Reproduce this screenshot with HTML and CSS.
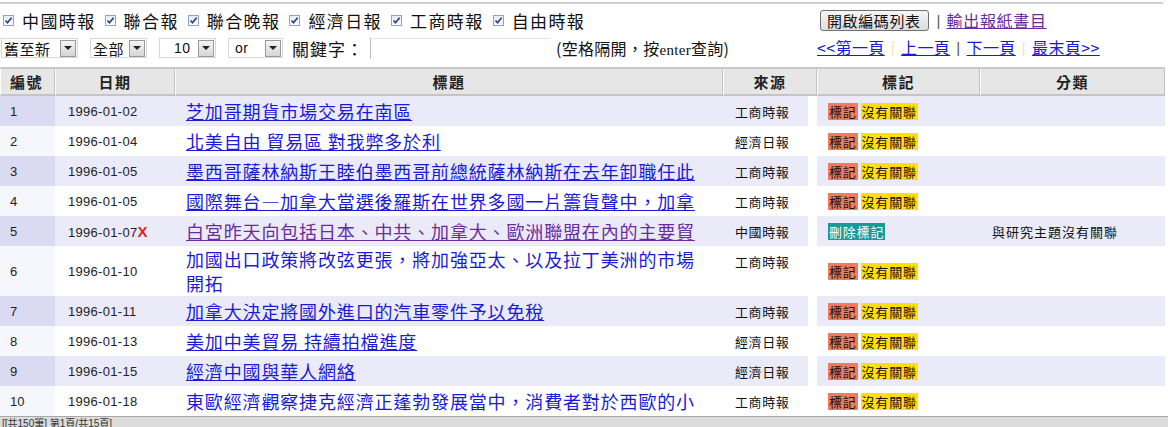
FILE: index.html
```html
<!DOCTYPE html>
<html lang="zh-Hant">
<head>
<meta charset="utf-8">
<title>新聞檢索</title>
<link rel="stylesheet" href="styles.css">
</head>
<body>
<div class="page">
  <div class="toolbar">
    <div class="toolbar-left">
      <div class="sources">
        <label class="src"><span class="cb"><svg viewBox="0 0 11 11" width="11" height="11"><path d="M2.5 5.5 L4.5 7.8 L8.6 2.8" fill="none" stroke="#2a3f8f" stroke-width="1.7"/></svg></span>中國時報</label>
        <label class="src"><span class="cb"><svg viewBox="0 0 11 11" width="11" height="11"><path d="M2.5 5.5 L4.5 7.8 L8.6 2.8" fill="none" stroke="#2a3f8f" stroke-width="1.7"/></svg></span>聯合報</label>
        <label class="src"><span class="cb"><svg viewBox="0 0 11 11" width="11" height="11"><path d="M2.5 5.5 L4.5 7.8 L8.6 2.8" fill="none" stroke="#2a3f8f" stroke-width="1.7"/></svg></span>聯合晚報</label>
        <label class="src"><span class="cb"><svg viewBox="0 0 11 11" width="11" height="11"><path d="M2.5 5.5 L4.5 7.8 L8.6 2.8" fill="none" stroke="#2a3f8f" stroke-width="1.7"/></svg></span>經濟日報</label>
        <label class="src"><span class="cb"><svg viewBox="0 0 11 11" width="11" height="11"><path d="M2.5 5.5 L4.5 7.8 L8.6 2.8" fill="none" stroke="#2a3f8f" stroke-width="1.7"/></svg></span>工商時報</label>
        <label class="src"><span class="cb"><svg viewBox="0 0 11 11" width="11" height="11"><path d="M2.5 5.5 L4.5 7.8 L8.6 2.8" fill="none" stroke="#2a3f8f" stroke-width="1.7"/></svg></span>自由時報</label>
      </div>
      <div class="filters">
        <div class="select sel-order"><span class="sel-text">舊至新</span><span class="sel-arrow"><svg viewBox="0 0 8 4" width="8" height="4"><path d="M0 0 L8 0 L4 4 Z" fill="#222"/></svg></span></div>
        <div class="select sel-range"><span class="sel-text">全部</span><span class="sel-arrow"><svg viewBox="0 0 8 4" width="8" height="4"><path d="M0 0 L8 0 L4 4 Z" fill="#222"/></svg></span></div>
        <div class="select sel-count"><span class="sel-text num">10</span><span class="sel-arrow"><svg viewBox="0 0 8 4" width="8" height="4"><path d="M0 0 L8 0 L4 4 Z" fill="#222"/></svg></span></div>
        <div class="select sel-op"><span class="sel-text num">or</span><span class="sel-arrow"><svg viewBox="0 0 8 4" width="8" height="4"><path d="M0 0 L8 0 L4 4 Z" fill="#222"/></svg></span></div>
        <span class="kw-label">關鍵字：</span>
        <span class="kw-input"></span>
        <span class="hint">(空格隔開，按<span class="hint-en">enter</span>查詢)</span>
      </div>
    </div>
    <div class="toolbar-right">
      <div class="actions">
        <span class="btn">開啟編碼列表</span>
        <span class="sep">|</span>
        <a class="visited" href="#">輸出報紙書目</a>
      </div>
      <div class="pager">
        <a href="#">&lt;&lt;第一頁</a><span class="sep light">|</span><a href="#">上一頁</a><span class="sep">|</span><a href="#">下一頁</a><span class="sep light">|</span><a href="#">最末頁&gt;&gt;</a>
      </div>
    </div>
  </div>

  <table class="results">
    <colgroup>
      <col class="c-no"><col class="c-date"><col class="c-title"><col class="c-src"><col class="c-mark"><col class="c-cat">
    </colgroup>
    <thead>
      <tr>
        <th class="th-no">編號</th><th>日期</th><th>標題</th><th>來源</th><th>標記</th><th>分類</th>
      </tr>
    </thead>
    <tbody>
      <tr class="odd"><td class="no">1</td><td class="date">1996-01-02</td><td class="title"><a href="#">芝加哥期貨市場交易在南區</a></td><td class="src">工商時報</td><td class="mark"><span class="tag t-mark">標記</span> <span class="tag t-none">沒有關聯</span></td><td class="cat"></td></tr>
      <tr class="even"><td class="no">2</td><td class="date">1996-01-04</td><td class="title"><a href="#">北美自由 貿易區 對我弊多於利</a></td><td class="src">經濟日報</td><td class="mark"><span class="tag t-mark">標記</span> <span class="tag t-none">沒有關聯</span></td><td class="cat"></td></tr>
      <tr class="odd"><td class="no">3</td><td class="date">1996-01-05</td><td class="title"><a href="#">墨西哥薩林納斯王睦伯墨西哥前總統薩林納斯在去年卸職任此</a></td><td class="src">工商時報</td><td class="mark"><span class="tag t-mark">標記</span> <span class="tag t-none">沒有關聯</span></td><td class="cat"></td></tr>
      <tr class="even"><td class="no">4</td><td class="date">1996-01-05</td><td class="title"><a href="#">國際舞台—加拿大當選後羅斯在世界多國一片籌貨聲中，加拿</a></td><td class="src">工商時報</td><td class="mark"><span class="tag t-mark">標記</span> <span class="tag t-none">沒有關聯</span></td><td class="cat"></td></tr>
      <tr class="odd"><td class="no">5</td><td class="date">1996-01-07<span class="x">X</span></td><td class="title"><a class="visited" href="#">白宮昨天向包括日本、中共、加拿大、歐洲聯盟在內的主要貿</a></td><td class="src">中國時報</td><td class="mark"><span class="tag t-del">刪除標記</span></td><td class="cat">與研究主題沒有關聯</td></tr>
      <tr class="even"><td class="no">6</td><td class="date">1996-01-10</td><td class="title"><a class="plain" href="#">加國出口政策將改弦更張，將加強亞太、以及拉丁美洲的市場開拓</a></td><td class="src">工商時報</td><td class="mark"><span class="tag t-mark">標記</span> <span class="tag t-none">沒有關聯</span></td><td class="cat"></td></tr>
      <tr class="odd"><td class="no">7</td><td class="date">1996-01-11</td><td class="title"><a href="#">加拿大決定將國外進口的汽車零件予以免稅</a></td><td class="src">工商時報</td><td class="mark"><span class="tag t-mark">標記</span> <span class="tag t-none">沒有關聯</span></td><td class="cat"></td></tr>
      <tr class="even"><td class="no">8</td><td class="date">1996-01-13</td><td class="title"><a href="#">美加中美貿易 持續拍檔進度</a></td><td class="src">經濟日報</td><td class="mark"><span class="tag t-mark">標記</span> <span class="tag t-none">沒有關聯</span></td><td class="cat"></td></tr>
      <tr class="odd"><td class="no">9</td><td class="date">1996-01-15</td><td class="title"><a href="#">經濟中國與華人網絡</a></td><td class="src">經濟日報</td><td class="mark"><span class="tag t-mark">標記</span> <span class="tag t-none">沒有關聯</span></td><td class="cat"></td></tr>
      <tr class="even"><td class="no">10</td><td class="date">1996-01-18</td><td class="title"><a class="plain" href="#">東歐經濟觀察捷克經濟正蓬勃發展當中，消費者對於西歐的小</a></td><td class="src">工商時報</td><td class="mark"><span class="tag t-mark">標記</span> <span class="tag t-none">沒有關聯</span></td><td class="cat"></td></tr>
    </tbody>
  </table>
  <div class="footer"><span class="footer-text">[[共150筆] 第1頁/共15頁]</span></div>
</div>
</body>
</html>
```
FILE: styles.css
```css
html, body {
  margin: 0;
  padding: 0;
  background: #ffffff;
}
body {
  font-family: "Noto Sans CJK TC", "Liberation Sans", sans-serif;
  color: #111;
  overflow: hidden;
}
.page {
  width: 1168px;
}
.toolbar {
  width: 1163px;
  margin-top: 2px;
  border-top: 2px solid #d0d0d0;
  display: flex;
  justify-content: space-between;
  height: 61px;
}
.toolbar-left {
  display: flex;
  flex-direction: column;
}
.sources {
  display: flex;
  align-items: center;
  height: 30px;
  padding-left: 3px;
  padding-top: 1px;
}
.src {
  display: flex;
  align-items: center;
  font-size: 17px;
  letter-spacing: 1.4px;
  margin-right: 9px;
  color: #111;
}
.cb {
  display: inline-flex;
  width: 11px;
  height: 11px;
  box-sizing: border-box;
  border: 1px solid #8ea4c2;
  background: linear-gradient(#e6ecf4, #ffffff);
  margin-right: 8px;
}
.cb svg {
  display: block;
  margin: -1px;
}
.filters {
  display: flex;
  align-items: center;
  height: 26px;
  padding-left: 1px;
}
.select {
  display: flex;
  align-items: center;
  height: 20px;
  box-sizing: border-box;
  border: 1px solid #d8d8d8;
  background: #fff;
  margin-right: 12px;
}
.sel-text {
  flex: 1;
  font-size: 15px;
  padding-left: 2px;
  letter-spacing: 0.5px;
}
.sel-text.num {
  font-family: "Liberation Sans", sans-serif;
  font-size: 14px;
  padding-left: 14px;
}
.sel-op .sel-text.num {
  padding-left: 6px;
}
.sel-arrow {
  width: 16px;
  height: 17px;
  box-sizing: border-box;
  border: 1px solid #9a9a9a;
  background: linear-gradient(#f4f4f4, #d6d6d6);
  display: flex;
  align-items: center;
  justify-content: center;
  margin-right: 1px;
}
.sel-order { width: 77px; }
.sel-range { width: 57px; }
.sel-count { width: 57px; }
.sel-op { width: 55px; margin-right: 9px; }
.kw-label {
  font-size: 17px;
  letter-spacing: 1px;
  margin-right: 6px;
}
.kw-input {
  width: 180px;
  height: 21px;
  box-sizing: border-box;
  border-left: 1px solid #bcbcbc;
  border-top: 1px solid #e4e4e4;
}
.hint {
  font-family: "Noto Sans CJK TC", "Liberation Serif", serif;
  font-size: 16px;
  margin-left: 6px;
  letter-spacing: 0.3px;
}
.hint-en {
  font-family: "Liberation Serif", serif;
  font-size: 15px;
}
.toolbar-right {
  display: flex;
  flex-direction: column;
  width: 346px;
}
.actions {
  display: flex;
  align-items: center;
  height: 30px;
  padding-top: 2px;
  box-sizing: border-box;
  padding-left: 3px;
}
.btn {
  display: inline-block;
  height: 21px;
  line-height: 19px;
  box-sizing: border-box;
  padding: 0 7px 0 6px;
  font-size: 15px;
  letter-spacing: 0.6px;
  border: 1px solid #707070;
  border-radius: 3px;
  background: linear-gradient(#f6f6f6, #dddddd);
  color: #111;
}
.sep {
  color: #555;
  font-family: "Liberation Sans", sans-serif;
  font-size: 15px;
  margin: 0 6px 0 8px;
}
.sep.light {
  color: #f0e8b8;
  margin: 0 6px 0 4px;
}
a {
  color: #1b1bd6;
  text-decoration: underline;
}
a.visited {
  color: #6a2c9c;
}
.actions a {
  font-size: 16px;
  letter-spacing: 0.7px;
}
.pager {
  display: flex;
  align-items: center;
  height: 26px;
  font-size: 16px;
  letter-spacing: 0.4px;
}
.pager .sep {
  margin: 0 6px;
}
.results {
  width: 1165px;
  border-collapse: separate;
  border-spacing: 0;
  table-layout: fixed;
  margin-top: 2px;
  border-top: 2px solid #c9c9c9;
}
.c-no { width: 55px; }
.c-date { width: 120px; }
.c-title { width: 548px; }
.c-src { width: 94px; }
.c-mark { width: 163px; }
.c-cat { width: 185px; }
th {
  height: 27px;
  padding: 0;
  background: #e6e6e6;
  border-left: 1px solid #ffffff;
  border-right: 1px solid #c2c2c2;
  border-bottom: 2px solid #c4c4c4;
  font-size: 15px;
  font-weight: bold;
  color: #222;
  letter-spacing: 1.5px;
  text-align: center;
  box-sizing: border-box;
}
th.th-no {
  text-align: left;
  padding-left: 9px;
}
td {
  padding: 0;
  height: 30px;
  vertical-align: middle;
  box-sizing: border-box;
}
tr.odd td { background: #eaeaf9; }
tr.odd td.no { background: #dadaf3; }
tr.even td { background: #ffffff; }
tr.even td.no { background: #f6f6fd; }
td.no {
  padding-left: 10px;
  font-family: "Liberation Sans", sans-serif;
  font-size: 13px;
  color: #222;
}
td.date {
  padding-left: 13px;
  font-family: "Liberation Sans", sans-serif;
  font-size: 13px;
  letter-spacing: 0.3px;
  color: #222;
}
.x {
  color: #e21f1f;
  font-weight: bold;
  font-size: 15px;
  letter-spacing: 0;
}
td.title {
  padding: 1px 20px 1px 11px;
  font-size: 18px;
  letter-spacing: 0.85px;
  line-height: 24px;
}
td.title a.plain {
  text-decoration: none;
}
td.src {
  padding-left: 12px;
  font-size: 13px;
  letter-spacing: 0.6px;
  color: #111;
}
td.mark {
  padding-left: 11px;
  font-size: 13px;
  white-space: nowrap;
}
.tag {
  display: inline-block;
  line-height: 17px;
  padding: 0 1px;
  letter-spacing: 0.8px;
  color: #111;
}
.t-mark { background: #f47a5c; }
.t-none { background: #ffdf10; }
.t-del { background: #179a98; color: #ffffff; }
td.cat {
  padding-left: 12px;
  font-size: 13px;
  letter-spacing: 1px;
  color: #111;
}
.footer {
  height: 14px;
  overflow: hidden;
  background: #dcdcdc;
  border-top: 1px solid #a8a8a8;
  padding-left: 2px;
  display: flex;
  align-items: center;
}
.footer-text {
  font-size: 10px;
  line-height: 12px;
  color: #333;
  font-family: "Liberation Sans", "Noto Sans CJK TC", sans-serif;
}
```
